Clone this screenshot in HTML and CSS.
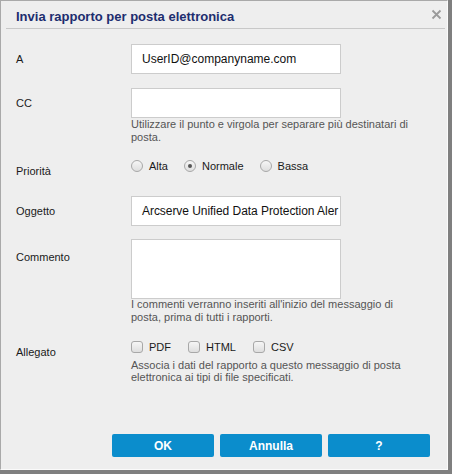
FILE: index.html
```html
<!DOCTYPE html>
<html lang="it">
<head>
<meta charset="utf-8">
<title>Invia rapporto per posta elettronica</title>
<link rel="stylesheet" href="styles.css">
</head>
<body>
<div class="dialog">
  <div class="header">
    <div class="title">Invia rapporto per posta elettronica</div>
    <span class="close" aria-label="Chiudi">
      <svg width="11" height="11" viewBox="0 0 11 11"><path d="M1.5 1.5 L9.5 9.5 M9.5 1.5 L1.5 9.5" stroke="#9a9a9a" stroke-width="1.8" fill="none"/></svg>
    </span>
  </div>
  <div class="form">
    <div class="row row-a">
      <div class="label label-input">A</div>
      <div class="field"><div class="input">UserID@companyname.com</div></div>
    </div>
    <div class="row row-cc">
      <div class="label label-input">CC</div>
      <div class="field">
        <div class="input"></div>
        <div class="help">Utilizzare il punto e virgola per separare più destinatari di posta.</div>
      </div>
    </div>
    <div class="row row-prio">
      <div class="label label-opt">Priorità</div>
      <div class="field options">
        <label class="opt"><span class="radio"></span>Alta</label>
        <label class="opt"><span class="radio checked"></span>Normale</label>
        <label class="opt"><span class="radio"></span>Bassa</label>
      </div>
    </div>
    <div class="row row-subj">
      <div class="label label-input">Oggetto</div>
      <div class="field"><div class="input clip"><span class="clip-text">Arcserve Unified Data Protection Aler</span></div></div>
    </div>
    <div class="row row-comm">
      <div class="label label-comm">Commento</div>
      <div class="field">
        <div class="textarea"></div>
        <div class="help help-comm">I commenti verranno inseriti all'inizio del messaggio di posta, prima di tutti i rapporti.</div>
      </div>
    </div>
    <div class="row row-att">
      <div class="label label-opt">Allegato</div>
      <div class="field">
        <div class="options">
          <label class="opt chk"><span class="check"></span>PDF</label>
          <label class="opt chk"><span class="check"></span>HTML</label>
          <label class="opt chk"><span class="check"></span>CSV</label>
        </div>
        <div class="help help-att">Associa i dati del rapporto a questo messaggio di posta elettronica ai tipi di file specificati.</div>
      </div>
    </div>
  </div>
  <div class="footer">
    <button class="btn">OK</button>
    <button class="btn">Annulla</button>
    <button class="btn">?</button>
  </div>
</div>
</body>
</html>
```
FILE: styles.css
```css
* { box-sizing: border-box; }
html, body { margin: 0; padding: 0; }
body {
  background: #7f7f7f;
  font-family: "Liberation Sans", Arial, sans-serif;
  font-size: 11px;
  color: #1a1a1a;
  width: 452px;
  height: 474px;
  overflow: hidden;
}
.dialog {
  width: 448px;
  height: 470px;
  background: #eeeeee;
  border: 1px solid;
  border-color: #a9a9a9 #fafafa #fafafa #a9a9a9;
  display: flex;
  flex-direction: column;
}
.header {
  margin: 0 2px 0 5px;
  padding: 8px 1px 4px 10px;
  border-bottom: 1px solid #c8c8c8;
  display: flex;
  justify-content: space-between;
  align-items: flex-start;
}
.title {
  font-size: 13px;
  font-weight: bold;
  line-height: 15px;
  color: #1d2d6e;
}
.close {
  width: 11px;
  height: 11px;
  margin-right: 2px;
  display: block;
}
.close svg { display: block; }
.form {
  flex: 1;
  padding: 15px 0 0 15px;
  display: flex;
  flex-direction: column;
}
.row {
  display: grid;
  grid-template-columns: 115px 300px;
  align-items: start;
}
.label { line-height: 13px; }
.label-input { line-height: 30px; }
.label-opt { padding-top: 7px; }
.label-comm { padding-top: 12px; }
.input {
  width: 210px;
  height: 30px;
  background: #fff;
  border: 1px solid #cccccc;
  padding: 0 0 0 10px;
  font-size: 12px;
  line-height: 28px;
  color: #111;
  white-space: nowrap;
  overflow: hidden;
}
.clip-text { letter-spacing: -0.05px; }
.textarea {
  width: 210px;
  height: 60px;
  background: #fff;
  border: 1px solid #cccccc;
}
.help {
  color: #555;
  line-height: 13px;
  width: 290px;
}
.row-cc { margin-top: 14px; }
.row-prio { margin-top: 14px; }
.row-subj { margin-top: 18px; }
.row-comm { margin-top: 13px; }
.row-att { margin-top: 15px; }
.help-comm { margin-top: -1px; }
.help-att { margin-top: 4px; line-height: 12px; }
.options {
  display: flex;
  align-items: center;
  height: 16px;
  line-height: 16px;
}
.opt {
  display: flex;
  align-items: center;
  margin-right: 16px;
  color: #1a1a1a;
}
.opt.chk { margin-right: 17px; }
.radio {
  width: 12px;
  height: 12px;
  border-radius: 50%;
  border: 1px solid #a8a8a8;
  background: linear-gradient(#f6f6f6, #dedede);
  margin-right: 6px;
  position: relative;
}
.radio.checked::after {
  content: "";
  position: absolute;
  left: 3px;
  top: 3px;
  width: 4px;
  height: 4px;
  border-radius: 50%;
  background: #555;
}
.check {
  width: 12px;
  height: 12px;
  border-radius: 3px;
  border: 1px solid #a8a8a8;
  background: linear-gradient(#f6f6f6, #dedede);
  margin-right: 6px;
}
.footer {
  display: flex;
  justify-content: flex-end;
  gap: 6px;
  padding: 0 17px 12px 0;
}
.btn {
  width: 102px;
  height: 23px;
  border: none;
  border-radius: 2px;
  background: #0b8dcc;
  color: #fff;
  font-family: "Liberation Sans", Arial, sans-serif;
  font-size: 12px;
  font-weight: bold;
  padding: 0;
  cursor: pointer;
}
```
